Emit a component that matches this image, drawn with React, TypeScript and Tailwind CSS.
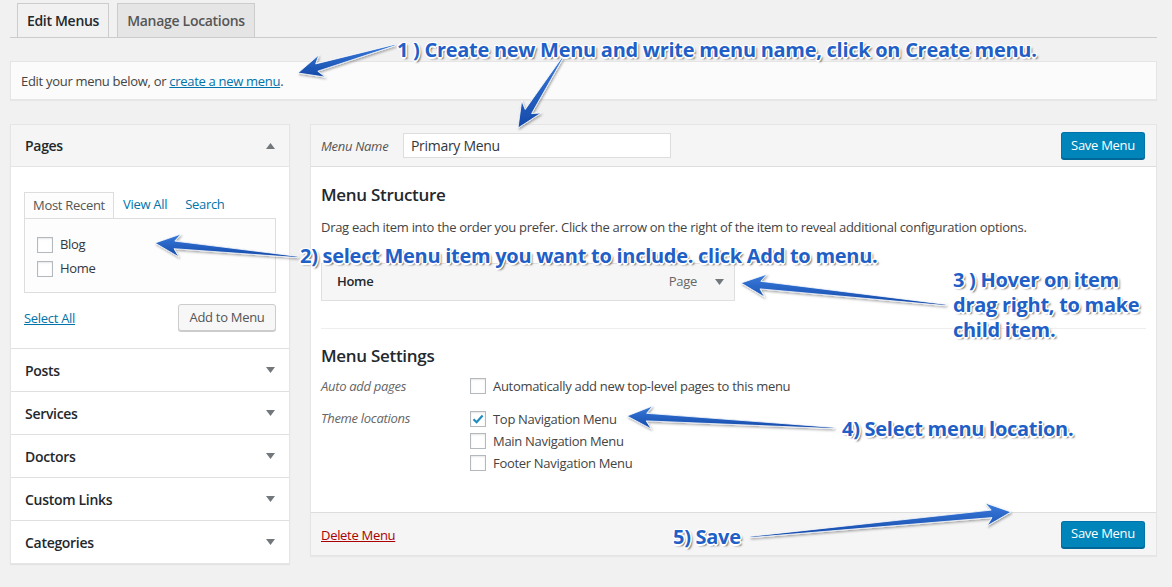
import React from "react";

type Arrow = { x1: number; y1: number; x2: number; y2: number };

const arrows: Arrow[] = [
  { x1: 395, y1: 45, x2: 298, y2: 73 },
  { x1: 563, y1: 57, x2: 518, y2: 128 },
  { x1: 298, y1: 257, x2: 155, y2: 243 },
  { x1: 946, y1: 305, x2: 741, y2: 283 },
  { x1: 834, y1: 428, x2: 627, y2: 416 },
  { x1: 750, y1: 537, x2: 1011, y2: 512 },
];

function arrowPoints({ x1, y1, x2, y2 }: Arrow): string {
  const dx = x2 - x1;
  const dy = y2 - y1;
  const len = Math.hypot(dx, dy);
  const ux = dx / len, uy = dy / len;
  const nx = -uy, ny = ux;
  const H = 25, W = 11.5, w = 3.8, t = 0.6;
  const pts: [number, number][] = [
    [x1 + nx * t, y1 + ny * t],
    [x2 - ux * H * 0.78 + nx * w, y2 - uy * H * 0.78 + ny * w],
    [x2 - ux * H + nx * W, y2 - uy * H + ny * W],
    [x2, y2],
    [x2 - ux * H - nx * W, y2 - uy * H - ny * W],
    [x2 - ux * H * 0.78 - nx * w, y2 - uy * H * 0.78 - ny * w],
    [x1 - nx * t, y1 - ny * t],
  ];
  return pts.map((p) => `${p[0].toFixed(1)},${p[1].toFixed(1)}`).join(" ");
}

function Note({ children, className }: { children: React.ReactNode; className: string }) {
  return (
    <div
      className={`absolute whitespace-nowrap font-['Open_Sans',sans-serif] text-[20px] font-bold leading-[25px] tracking-[-0.28px] text-[#1f5fc6] [text-shadow:-1px_-1px_0_#fff,1px_-1px_0_#fff,-1px_1px_0_#fff,1px_1px_0_#fff,0_-1.5px_0_#fff,0_1.5px_0_#fff,-1.5px_0_0_#fff,1.5px_0_0_#fff,2px_2px_2px_#666] ${className}`}
    >
      {children}
    </div>
  );
}

function Checkbox({ checked = false }: { checked?: boolean }) {
  return (
    <span className="flex h-4 w-4 shrink-0 items-center justify-center border border-[#b4b9be] bg-white shadow-[inset_0_1px_2px_rgba(0,0,0,0.1)]">
      {checked && (
        <svg width="14" height="14" viewBox="0 0 14 14">
          <path d="M2.5 7.2 L5.6 10.2 L11.6 3.6" fill="none" stroke="#1e8cbe" strokeWidth="2.2" />
        </svg>
      )}
    </span>
  );
}

function Tri({ up = false }: { up?: boolean }) {
  return (
    <svg width="9" height="6" viewBox="0 0 9 6" className="shrink-0">
      <path d={up ? "M0 6 L4.5 0 L9 6 Z" : "M0 0 L9 0 L4.5 6 Z"} fill="#72777c" />
    </svg>
  );
}

function SaveButton() {
  return (
    <button
      type="button"
      className="h-[27px] w-[84px] rounded-[3px] border border-[#0073aa] border-b-[#006799] bg-[#0085ba] text-[13px] text-white shadow-[0_1px_0_#006799]"
    >
      Save Menu
    </button>
  );
}

const sections = ["Posts", "Services", "Doctors", "Custom Links", "Categories"];

export default function App() {
  return (
    <div className="relative h-[587px] w-[1172px] overflow-hidden bg-[#f1f1f1] font-['Open_Sans',sans-serif] text-[13px] tracking-[-0.3px] text-[#444]">
      {/* tabs */}
      <div className="ml-[10px] mr-[15px] flex gap-[8px] border-b border-[#ccc] pl-[7px] pt-[3px]">
        <div className="flex h-[34px] w-[92px] items-center justify-center border border-b-0 border-[#ccc] bg-[#f1f1f1] text-[14px] font-semibold text-[#23282d]">
          Edit Menus
        </div>
        <div className="flex h-[34px] w-[138px] items-center justify-center border border-b-0 border-[#ccc] bg-[#e5e5e5] text-[14px] font-semibold text-[#555]">
          Manage Locations
        </div>
      </div>

      {/* notice */}
      <div className="ml-[10px] mr-[15px] mt-[23px] flex h-[39px] items-center border border-[#e5e5e5] bg-[#fbfbfb] pl-[10px] pt-[2px] text-[#444] shadow-[0_1px_1px_rgba(0,0,0,0.04)]">
        Edit your menu below, or&nbsp;
        <span className="text-[#0073aa] underline">create a new menu</span>.
      </div>

      {/* main */}
      <div className="ml-[10px] mr-[15px] mt-[24px] flex items-start gap-[20px]">
        {/* left column */}
        <div className="w-[280px] shrink-0 border border-[#e5e5e5] bg-white shadow-[0_1px_1px_rgba(0,0,0,0.06)]">
          <div className="flex h-[42px] items-center justify-between border-b border-[#e5e5e5] bg-[#f5f5f5] pl-[14px] pr-[14px] text-[14px] font-semibold text-[#23282d]">
            Pages
            <Tri up />
          </div>
          <div className="h-[181px] px-[13px] pt-[25px]">
            <div className="flex items-end">
              <div className="flex h-[26px] w-[90px] items-center justify-center border border-b-0 border-[#ddd] bg-[#fdfdfd] text-[#555]">
                Most Recent
              </div>
              <div className="flex h-[26px] items-center pl-[9px] text-[#0073aa]">View All</div>
              <div className="flex h-[26px] items-center pl-[18px] text-[#0073aa]">Search</div>
            </div>
            <div className="flex h-[75px] flex-col gap-[4px] border border-[#ddd] bg-[#fdfdfd] pl-[12px] pt-[16px] text-[#32373c]">
              <label className="flex h-[20px] items-center gap-[7px]">
                <Checkbox /> Blog
              </label>
              <label className="flex h-[20px] items-center gap-[7px]">
                <Checkbox /> Home
              </label>
            </div>
            <div className="mt-[11px] flex items-center justify-between">
              <span className="pt-[2px] text-[#0073aa] underline">Select All</span>
              <button
                type="button"
                className="h-[27px] w-[98px] rounded-[3px] border border-[#ccc] bg-[#f7f7f7] text-[#555] shadow-[0_1px_0_#ccc]"
              >
                Add to Menu
              </button>
            </div>
          </div>
          {sections.map((s) => (
            <div
              key={s}
              className="flex h-[43px] items-center justify-between border-t border-[#e0e0e0] pl-[14px] pr-[14px] text-[14px] font-semibold text-[#23282d]"
            >
              {s}
              <Tri />
            </div>
          ))}
        </div>

        {/* right column */}
        <div className="flex-1 border border-[#e5e5e5] bg-white shadow-[0_1px_1px_rgba(0,0,0,0.04)]">
          <div className="flex h-[42px] items-center border-b border-[#ddd] bg-[#f5f5f5] pl-[10px] pr-[11px]">
            <span className="w-[82px] pt-[3px] italic text-[#555]">Menu Name</span>
            <div className="flex h-[25px] w-[268px] items-center border border-[#ddd] bg-white pl-[7px] text-[14px] text-[#32373c]">
              Primary Menu
            </div>
            <div className="ml-auto">
              <SaveButton />
            </div>
          </div>

          <div className="h-[345px] px-[10px] pt-[17px]">
            <h3 className="text-[17px] font-semibold leading-[22px] text-[#23282d]">Menu Structure</h3>
            <p className="mt-[11px] leading-[20px] text-[#444]">
              Drag each item into the order you prefer. Click the arrow on the right of the item to reveal additional
              configuration options.
            </p>
            <div className="mt-[26px] flex h-[38px] w-[414px] items-center border border-[#dfdfdf] bg-[#f6f6f6] pl-[15px] pr-[10px]">
              <span className="font-semibold text-[#23282d]">Home</span>
              <span className="ml-auto text-[#666]">Page</span>
              <span className="ml-[18px]">
                <Tri />
              </span>
            </div>
            <div className="mt-[27px] border-t border-[#eee]" />
            <h3 className="mt-[16px] text-[17px] font-semibold leading-[22px] text-[#23282d]">Menu Settings</h3>
            <div className="mt-[9px] flex leading-[20px]">
              <span className="w-[149px] italic text-[#666]">Auto add pages</span>
              <label className="flex items-center gap-[7px] text-[#444]">
                <Checkbox /> Automatically add new top-level pages to this menu
              </label>
            </div>
            <div className="mt-[12px] flex leading-[20px]">
              <span className="w-[149px] italic text-[#666]">Theme locations</span>
              <div className="flex flex-col gap-[2px] pt-[1px]">
                <label className="flex items-center gap-[7px] text-[#444]">
                  <Checkbox checked /> Top Navigation Menu
                </label>
                <label className="flex items-center gap-[7px] text-[#444]">
                  <Checkbox /> Main Navigation Menu
                </label>
                <label className="flex items-center gap-[7px] text-[#444]">
                  <Checkbox /> Footer Navigation Menu
                </label>
              </div>
            </div>
          </div>

          <div className="flex h-[43px] items-center justify-between border-t border-[#ddd] bg-[#f5f5f5] pl-[10px] pr-[11px]">
            <span className="pt-[4px] text-[#a00] underline">Delete Menu</span>
            <SaveButton />
          </div>
        </div>
      </div>

      {/* annotations */}
      <div className="pointer-events-none absolute inset-0">
        <svg width="1172" height="587" className="absolute left-0 top-0">
          <defs>
            <linearGradient id="ag" x1="0" y1="0" x2="0" y2="1">
              <stop offset="0" stopColor="#3a7bdc" />
              <stop offset="1" stopColor="#1449a8" />
            </linearGradient>
            <filter id="as" x="-10%" y="-10%" width="120%" height="130%">
              <feDropShadow dx="1" dy="1.5" stdDeviation="1" floodColor="#000" floodOpacity="0.35" />
            </filter>
          </defs>
          {arrows.map((a, i) => (
            <polygon key={i} points={arrowPoints(a)} fill="url(#ag)" stroke="#fff" strokeWidth="0.8" filter="url(#as)" />
          ))}
        </svg>
        <Note className="left-[397px] top-[37px]">1 ) Create new Menu and write menu name, click on Create menu.</Note>
        <Note className="left-[300px] top-[243px]">2) select Menu item you want to include. click Add to menu.</Note>
        <Note className="left-[953px] top-[267px]">
          3 ) Hover on item
          <br />
          drag right, to make
          <br />
          child item.
        </Note>
        <Note className="left-[842px] top-[416px]">4) Select menu location.</Note>
        <Note className="left-[673px] top-[524px]">5) Save</Note>
      </div>
    </div>
  );
}
